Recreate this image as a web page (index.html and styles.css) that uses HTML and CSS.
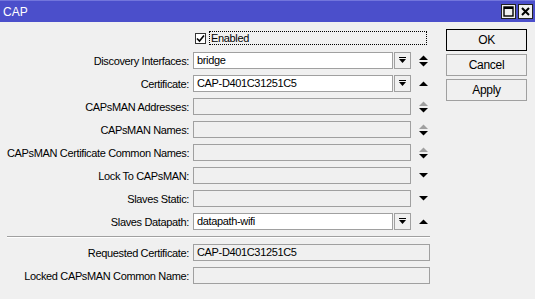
FILE: index.html
```html
<!DOCTYPE html>
<html lang="en">
<head>
  <meta charset="UTF-8">
  <title>CAP</title>
  <link rel="stylesheet" href="styles.css">
</head>
<body>
  <div class="titlebar">
    <span class="title">CAP</span>
    <div class="winbtns">
      <span class="winbtn"><svg width="11" height="11" viewBox="0 0 11 11"><rect x="1" y="1" width="9" height="9" fill="none" stroke="#000" stroke-width="1.4"/><rect x="1" y="1" width="9" height="2" fill="#000"/></svg></span>
      <span class="winbtn"><svg width="11" height="11" viewBox="0 0 11 11"><path d="M2 2 L9 9 M9 2 L2 9" stroke="#000" stroke-width="2"/></svg></span>
    </div>
  </div>

  <div class="main">
    <div class="form">
      <div class="row check-row">
        <span></span>
        <label class="check"><span class="box"><svg width="9" height="9" viewBox="0 0 9 9"><path d="M1 4.5 L3.5 7 L8 1.5" fill="none" stroke="#000" stroke-width="1.6"/></svg></span><span class="focus">Enabled</span></label>
      </div>

      <div class="row">
        <span class="label">Discovery Interfaces:</span>
        <div class="combo"><div class="field white">bridge</div><span class="drop"></span></div>
        <span class="arrows up-down"></span>
      </div>
      <div class="row">
        <span class="label">Certificate:</span>
        <div class="combo"><div class="field white">CAP-D401C31251C5</div><span class="drop"></span></div>
        <span class="arrows up"></span>
      </div>
      <div class="row">
        <span class="label">CAPsMAN Addresses:</span>
        <div class="field"></div>
        <span class="arrows up-down off"></span>
      </div>
      <div class="row">
        <span class="label">CAPsMAN Names:</span>
        <div class="field"></div>
        <span class="arrows up-down off"></span>
      </div>
      <div class="row">
        <span class="label">CAPsMAN Certificate Common Names:</span>
        <div class="field"></div>
        <span class="arrows up-down off"></span>
      </div>
      <div class="row">
        <span class="label">Lock To CAPsMAN:</span>
        <div class="field"></div>
        <span class="arrows down"></span>
      </div>
      <div class="row">
        <span class="label">Slaves Static:</span>
        <div class="field"></div>
        <span class="arrows down"></span>
      </div>
      <div class="row">
        <span class="label">Slaves Datapath:</span>
        <div class="combo"><div class="field white">datapath-wifi</div><span class="drop"></span></div>
        <span class="arrows up"></span>
      </div>

      <hr class="sep">

      <div class="row">
        <span class="label">Requested Certificate:</span>
        <div class="field wide">CAP-D401C31251C5</div>
      </div>
      <div class="row">
        <span class="label">Locked CAPsMAN Common Name:</span>
        <div class="field wide"></div>
      </div>
    </div>

    <div class="buttons">
      <button class="btn default">OK</button>
      <button class="btn">Cancel</button>
      <button class="btn">Apply</button>
    </div>
  </div>
</body>
</html>
```

FILE: styles.css
```css
body {
  margin: 0;
  background-color: #f0f0f0;
  font-family: "Liberation Sans", Arial, sans-serif;
  font-size: 11px;
  letter-spacing: -0.35px;
  color: #000;
}

.titlebar {
  height: 21px;
  border-top: 1px solid #7275dc;
  background-color: #4b4fcb;
  display: flex;
  align-items: center;
  justify-content: space-between;
  padding: 0 2px 0 3px;
}

.title {
  color: #fff;
  font-size: 12px;
  letter-spacing: 0;
}

.winbtns {
  display: flex;
  gap: 2px;
}

.winbtn {
  width: 13px;
  height: 13px;
  background-color: #f0f0f0;
  border: 1px solid #222;
  display: flex;
  align-items: center;
  justify-content: center;
}

.main {
  display: flex;
  padding: 9px 0 0 7px;
}

.form {
  width: 424px;
}

.row {
  display: grid;
  grid-template-columns: 182px 218px 24px;
  column-gap: 4px;
  align-items: center;
  height: 17px;
  margin-bottom: 6px;
}

.check-row {
  height: 14px;
  margin-bottom: 7px;
}

.label {
  text-align: right;
  white-space: nowrap;
}

.check {
  display: flex;
  align-items: center;
  grid-column: 2 / 4;
  margin-left: 2px;
  margin-right: 12px;
}

.box {
  width: 11px;
  height: 11px;
  box-sizing: border-box;
  border: 1px solid #333;
  background-color: #fff;
  display: flex;
  align-items: center;
  justify-content: center;
  margin-right: 3px;
}

.focus {
  flex: 1;
  height: 12px;
  line-height: 12px;
  border: 1px dotted #000;
  padding-left: 1px;
}

.combo {
  display: flex;
  gap: 1px;
}

.field {
  height: 17px;
  box-sizing: border-box;
  border: 1px solid #a0a0a0;
  padding: 0 3px;
  line-height: 15px;
  white-space: nowrap;
}

.combo .field {
  flex: 1;
}

.field.white {
  background-color: #fff;
}

.field.wide {
  grid-column: 2 / 4;
  width: 237px;
}

.drop {
  width: 17px;
  height: 17px;
  box-sizing: border-box;
  border: 1px solid #a0a0a0;
  background: url("data:image/svg+xml,%3Csvg xmlns='http://www.w3.org/2000/svg' width='7' height='7'%3E%3Crect x='0' y='0' width='7' height='1' fill='%23000'/%3E%3Cpath d='M0 2 H7 L3.5 6 Z' fill='%23000'/%3E%3C/svg%3E") center no-repeat;
}

.arrows {
  height: 17px;
  background-repeat: no-repeat;
  background-position: 4px center;
}

.arrows.up-down {
  background-image: url("data:image/svg+xml,%3Csvg xmlns='http://www.w3.org/2000/svg' width='9' height='12'%3E%3Cpath d='M0 5 L4.5 0.5 L9 5 Z' fill='%23000'/%3E%3Cpath d='M0 7 L4.5 11.5 L9 7 Z' fill='%23000'/%3E%3C/svg%3E");
}

.arrows.up-down.off {
  background-image: url("data:image/svg+xml,%3Csvg xmlns='http://www.w3.org/2000/svg' width='9' height='12'%3E%3Cpath d='M0 5 L4.5 0.5 L9 5 Z' fill='%23a0a0a0'/%3E%3Cpath d='M0 7 L4.5 11.5 L9 7 Z' fill='%23000'/%3E%3C/svg%3E");
}

.arrows.up {
  background-image: url("data:image/svg+xml,%3Csvg xmlns='http://www.w3.org/2000/svg' width='9' height='5'%3E%3Cpath d='M0 5 L4.5 0.5 L9 5 Z' fill='%23000'/%3E%3C/svg%3E");
}

.arrows.down {
  background-image: url("data:image/svg+xml,%3Csvg xmlns='http://www.w3.org/2000/svg' width='9' height='5'%3E%3Cpath d='M0 0 L4.5 4.5 L9 0 Z' fill='%23000'/%3E%3C/svg%3E");
}

.sep {
  margin: 1px 0 6px 0;
  border: none;
  border-top: 1px solid #a0a0a0;
  border-bottom: 1px solid #fff;
  width: 423px;
}

.buttons {
  display: flex;
  flex-direction: column;
  gap: 3px;
  margin-left: 15px;
  margin-top: -2px;
}

.btn {
  width: 81px;
  height: 22px;
  font-family: inherit;
  font-size: 12px;
  letter-spacing: -0.3px;
  background-color: #f0f0f0;
  border: 1px solid #a0a0a0;
  padding: 0;
}

.btn.default {
  border: 1px solid #000;
}
```
